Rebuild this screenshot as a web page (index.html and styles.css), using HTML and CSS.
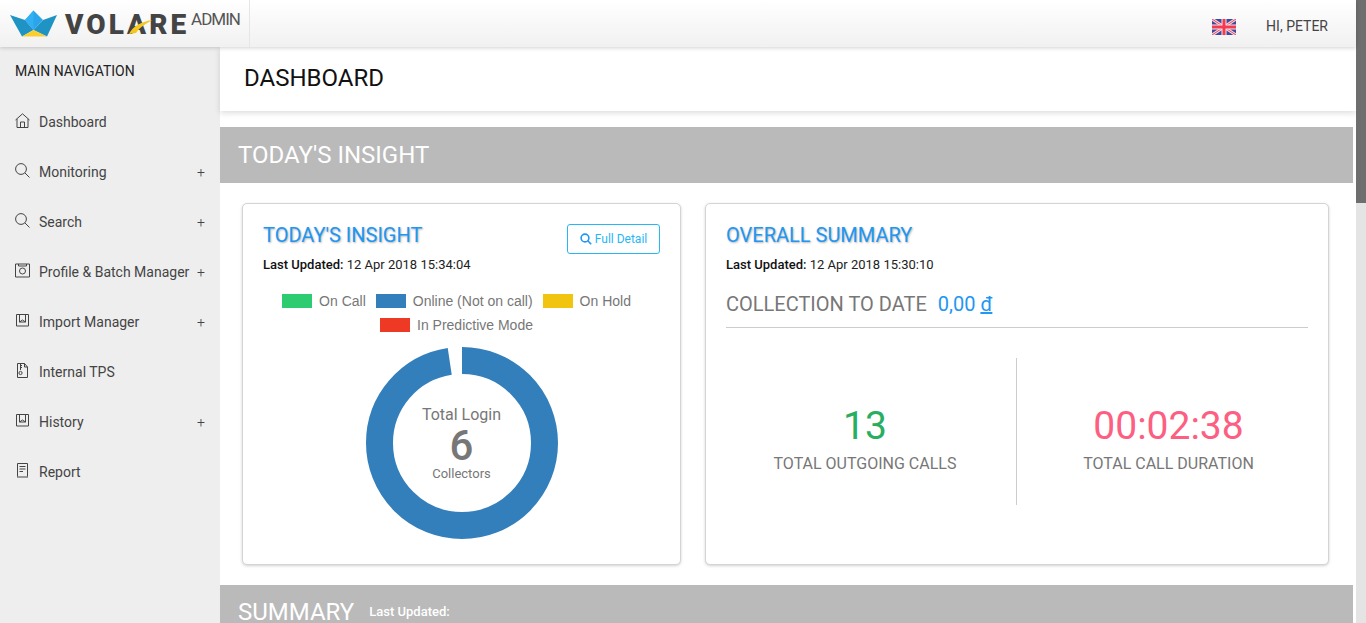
FILE: index.html
```html
<!DOCTYPE html>
<html lang="en">
<head>
<meta charset="utf-8">
<title>Volare Admin</title>
<link rel="stylesheet" href="styles.css">
</head>
<body>
<div class="page">
  <div class="viewport">
    <header class="topbar">
      <div class="brand">
        <svg class="logo-mark" viewBox="0 0 48 28" width="48" height="28">
          <path d="M0 5 L15 10 L23.5 20 L12 26.5 Z" fill="#1f93c3"/>
          <path d="M47 5 L33 10 L23.5 20 L37 26.5 Z" fill="#1f93c3"/>
          <path d="M15 10 L23.5 .5 L33 10 L23.5 20 Z" fill="#2aa5ea"/>
          <path d="M15 10 L23.5 .5 L23.5 20 Z" fill="#33b0f4"/>
          <path d="M23.5 20 L37 26.5 L12 26.5 Z" fill="#f8cf2e"/>
        </svg>
        <span class="wordmark">VOLARE<svg class="swoosh" viewBox="0 0 24 14" width="24" height="14"><path d="M0 14 C4 6 12 2 23 0 C17 4 12 6 7 13 Z" fill="#f6c81e"/></svg></span>
        <span class="admin">ADMIN</span>
      </div>
      <div class="user">
        <svg class="flag" viewBox="0 0 24 16" width="24" height="16">
          <rect width="24" height="16" fill="#3f4a9e"/>
          <path d="M0 0 L24 16 M24 0 L0 16" stroke="#f3d3dc" stroke-width="3"/>
          <path d="M0 0 L24 16 M24 0 L0 16" stroke="#ef4a5c" stroke-width="1"/>
          <path d="M12 0 V16 M0 8 H24" stroke="#f7e6ea" stroke-width="5"/>
          <path d="M12 0 V16 M0 8 H24" stroke="#f5394f" stroke-width="3"/>
        </svg>
        <span class="hello">HI, PETER</span>
      </div>
    </header>
    <div class="layout">
      <aside class="sidebar">
        <div class="nav-title">MAIN NAVIGATION</div>
        <nav class="nav">
          <a class="nav-item"><svg class="nav-icon" viewBox="0 0 15 15"><path d="M.5 7 L7.5 .8 L14.5 7 M2 6 V14.5 H13 V6 M5.5 14.5 V9 H9.5 V14.5"/></svg><span class="nav-label">Dashboard</span></a>
          <a class="nav-item"><svg class="nav-icon" viewBox="0 0 15 15"><circle cx="6" cy="6" r="5.4"/><path d="M9.9 9.9 L14.5 14.5"/></svg><span class="nav-label">Monitoring</span><span class="plus">+</span></a>
          <a class="nav-item"><svg class="nav-icon" viewBox="0 0 15 15"><circle cx="6" cy="6" r="5.4"/><path d="M9.9 9.9 L14.5 14.5"/></svg><span class="nav-label">Search</span><span class="plus">+</span></a>
          <a class="nav-item"><svg class="nav-icon" viewBox="0 0 15 15"><path d="M.5 1 H14.5 V14 H.5 Z M3.5 1 V3 H11.5 V1"/><circle cx="7.5" cy="8" r="3"/></svg><span class="nav-label">Profile &amp; Batch Manager</span><span class="plus">+</span></a>
          <a class="nav-item"><svg class="nav-icon" viewBox="0 0 15 15"><path d="M1.5 1.5 H13.5 V13 H1.5 Z M4.5 1.5 V9 H10.5 V1.5 M4.5 9 L7.5 7 L10.5 9"/></svg><span class="nav-label">Import Manager</span><span class="plus">+</span></a>
          <a class="nav-item"><svg class="nav-icon" viewBox="0 0 15 15"><path d="M2.5 .5 H9.5 L12.5 4 V14.5 H2.5 Z M9.5 .5 V4 H12.5 M5.5 .5 V7 M5.5 2.5 H7 M5.5 4.5 H7"/><circle cx="5.5" cy="10" r="1.6"/></svg><span class="nav-label">Internal TPS</span></a>
          <a class="nav-item"><svg class="nav-icon" viewBox="0 0 15 15"><path d="M1.5 1.5 H13.5 V13 H1.5 Z M4.5 1.5 V9 H10.5 V1.5 M4.5 9 L7.5 7 L10.5 9"/></svg><span class="nav-label">History</span><span class="plus">+</span></a>
          <a class="nav-item"><svg class="nav-icon" viewBox="0 0 15 15"><path d="M2.5 13.5 V.5 H12.5 V13.5 M4.5 3.5 H10.5 M4.5 6 H10.5 M4.5 8.5 H8 M2 14 H13" /></svg><span class="nav-label">Report</span></a>
        </nav>
      </aside>
      <main class="main">
        <div class="page-head"><h1 class="page-title">DASHBOARD</h1></div>
        <div class="band"><h2 class="band-title">TODAY'S INSIGHT</h2></div>
        <section class="cards">
          <article class="card card-left">
            <div class="card-top">
              <h3 class="card-title">TODAY'S INSIGHT</h3>
              <a class="btn-detail"><svg class="btn-icon" viewBox="0 0 12 12"><circle cx="5" cy="5" r="3.9"/><path d="M7.8 7.8 L11.2 11.2"/></svg>Full Detail</a>
            </div>
            <p class="updated"><b>Last Updated:</b> 12 Apr 2018 15:34:04</p>
            <ul class="legend">
              <li class="legend-item"><i class="swatch swatch-green"></i>On Call</li>
              <li class="legend-item"><i class="swatch swatch-blue"></i>Online (Not on call)</li>
              <li class="legend-item"><i class="swatch swatch-yellow"></i>On Hold</li>
              <li class="legend-item"><i class="swatch swatch-red"></i>In Predictive Mode</li>
            </ul>
            <div class="donut">
              <svg class="donut-ring" viewBox="0 0 192 192" width="192" height="192">
                <circle cx="96" cy="96" r="82.5" pathLength="360" stroke-dasharray="351.4 360" transform="rotate(-90 96 96)"/>
              </svg>
              <div class="donut-text">
                <span class="donut-top">Total Login</span>
                <span class="donut-num">6</span>
                <span class="donut-sub">Collectors</span>
              </div>
            </div>
          </article>
          <article class="card card-right">
            <h3 class="card-title">OVERALL SUMMARY</h3>
            <p class="updated updated-right"><b>Last Updated:</b> 12 Apr 2018 15:30:10</p>
            <div class="collection"><span>COLLECTION TO DATE</span><span class="amount">0,00 <u>đ</u></span></div>
            <div class="stats">
              <div class="stat stat-first">
                <div class="stat-num stat-green">13</div>
                <div class="stat-label">TOTAL OUTGOING CALLS</div>
              </div>
              <div class="stat stat-divided">
                <div class="stat-num stat-pink">00:02:38</div>
                <div class="stat-label">TOTAL CALL DURATION</div>
              </div>
            </div>
          </article>
        </section>
        <div class="band band-summary"><h2 class="band-title">SUMMARY</h2><span class="band-note">Last Updated:</span></div>
      </main>
    </div>
  </div>
  <div class="scrollbar"><div class="scroll-thumb"></div></div>
</div>
</body>
</html>
```
FILE: styles.css
```css
* { box-sizing: border-box; }
html, body { margin: 0; height: 100%; overflow: hidden; background: #fff; }
body { font-family: Roboto, "Liberation Sans", sans-serif; color: #444; }
h1, h2, h3, p, ul { margin: 0; padding: 0; }

.page { display: flex; height: 623px; overflow: hidden; }
.viewport { flex: 1; min-width: 0; display: flex; flex-direction: column; }
.scrollbar { width: 10px; background: #e4e4e4; }
.scroll-thumb { height: 203px; background: #6e6e6e; }

.topbar {
  position: relative; z-index: 3;
  height: 47px; flex: none;
  display: flex; align-items: stretch; justify-content: space-between;
  background: linear-gradient(#fff, #f1f1f1);
  box-shadow: 0 1px 4px rgba(0,0,0,.18);
}
.brand { width: 250px; display: flex; align-items: flex-start; padding-left: 10px; border-right: 1px solid #e6e6e6; }
.logo-mark { margin-top: 10px; flex: none; }
.wordmark { position: relative; margin: 7px 0 0 7px; font-size: 28px; line-height: 36px; font-weight: 900; letter-spacing: 3px; color: #444; }
.swoosh { position: absolute; left: 64px; top: 13px; }
.admin { margin: 11px 0 0 2px; font-size: 17px; line-height: 17px; color: #555; letter-spacing: -1px; }
.user { display: flex; align-items: center; padding-right: 28px; }
.flag { display: block; margin-top: 7px; }
.hello { margin: 4px 0 0 30px; font-size: 14px; color: #444; }

.layout { flex: 1; display: flex; min-height: 0; }
.sidebar { width: 220px; flex: none; background: #eee; padding: 16px 0 0 15px; }
.nav-title { font-size: 14px; line-height: 16px; font-weight: 400; color: #222; }
.nav { display: flex; flex-direction: column; margin-top: 18px; }
.nav-item { height: 50px; display: flex; align-items: center; padding-right: 15px; color: #444; font-size: 14px; }
.nav-icon { width: 15px; height: 15px; flex: none; margin-right: 9px; margin-top: -3px; fill: none; stroke: #444; stroke-width: 1; }
.nav-label { flex: 1; white-space: nowrap; }
.plus { font-size: 14px; font-weight: 300; color: #444; }

.main { flex: 1; min-width: 0; padding-right: 3px; }
.page-head {
  height: 64px; margin-right: -3px; padding: 15px 0 0 24px;
  background: #fff; box-shadow: 0 2px 6px rgba(0,0,0,.14);
}
.page-title { font-size: 24px; line-height: 32px; font-weight: 400; color: #111; }
.band { background: #bababa; height: 56px; margin-top: 16px; padding-left: 18px; display: flex; align-items: center; color: #fff; }
.band-title { font-size: 24px; font-weight: 400; line-height: 32px; }
.band-summary { margin-top: 20px; align-items: flex-start; padding-top: 11px; height: 60px; }
.band-note { margin: 8px 0 0 15px; font-size: 13px; font-weight: 500; line-height: 16px; }

.cards { display: flex; gap: 24px; padding: 20px 24px 0 22px; }
.card {
  height: 362px; background: #fff; border: 1px solid #d4d4d4; border-radius: 5px;
  box-shadow: 0 1px 3px rgba(0,0,0,.18);
}
.card-left { width: 439px; padding: 19px 20px 0; }
.card-right { width: 624px; padding: 19px 20px 0; }
.card-top { display: flex; justify-content: space-between; align-items: flex-start; height: 34px; }
.card-title { font-size: 20px; line-height: 24px; font-weight: 400; color: #2196f3; text-shadow: 1px 1px 2px rgba(0,0,0,.3); }
.btn-detail {
  width: 93px; height: 30px; margin-top: 1px; display: flex; align-items: center; justify-content: center; gap: 3px;
  border: 1px solid #29b6f6; border-radius: 3px; color: #29b6f6; font-size: 12px;
}
.btn-icon { width: 12px; height: 12px; fill: none; stroke: #2196f3; stroke-width: 1.6; }
.updated { font-size: 13px; line-height: 16px; color: #222; margin-top: 0; }
.updated b { font-weight: 500; color: #111; }
.updated-right { margin-top: 10px; }

.legend { list-style: none; display: flex; flex-wrap: wrap; justify-content: center; margin: 20px 0 0; padding-right: 10px; column-gap: 10px; row-gap: 8px; }
.legend-item { display: flex; align-items: center; height: 16px; font-family: "Liberation Sans", Arial, sans-serif; font-size: 14px; color: #777; white-space: nowrap; }
.swatch { display: block; width: 30px; height: 14px; margin-right: 7px; }
.swatch-green { background: #2ecc71; }
.swatch-blue { background: #337fbc; }
.swatch-yellow { background: #f1c40f; }
.swatch-red { background: #ee3a24; }

.donut { position: relative; width: 192px; height: 192px; margin: 14px auto 0; }
.donut-ring { display: block; fill: none; stroke: #337fbc; stroke-width: 27; }
.donut-text { position: absolute; inset: 0; display: flex; flex-direction: column; align-items: center; padding-top: 58px; color: #777; }
.donut-top { font-size: 16px; line-height: 20px; }
.donut-num { font-size: 42px; line-height: 41px; font-weight: 500; }
.donut-sub { font-size: 13px; line-height: 16px; }

.collection { display: flex; gap: 11px; align-items: center; height: 42px; margin-top: 13px; padding-bottom: 6px; border-bottom: 1px solid #ccc; font-size: 20px; color: #777; }
.amount { color: #2196f3; }
.stats { display: flex; margin-top: 30px; height: 147px; }
.stat { flex: none; width: 290px; display: flex; flex-direction: column; align-items: center; padding-top: 44px; }
.stat-first { padding-right: 12px; }
.stat-divided { flex: 1; padding-left: 12px; border-left: 1px solid #ccc; }
.stat-num { font-size: 39px; line-height: 48px; }
.stat-green { color: #27ae60; }
.stat-pink { color: #fc5f82; }
.stat-label { font-size: 16px; line-height: 20px; color: #777; margin-top: 4px; }
```
